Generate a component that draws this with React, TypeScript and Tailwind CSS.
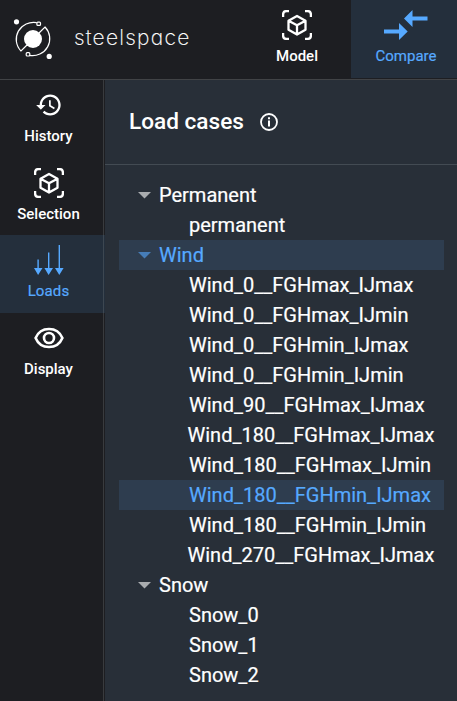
import React from "react";

function ModelIcon() {
  return (
    <svg width="30" height="30" viewBox="0 0 30 30" fill="none" stroke="currentColor" strokeWidth="2.3" strokeLinejoin="round">
      <path d="M1.100 7V4.500Q1.100 1.100 4.500 1.100H7M23 1.100h2.500Q28.900 1.100 28.900 4.500V7M28.900 23v2.500Q28.900 28.900 25.500 28.900H23M7 28.900H4.500Q1.100 28.900 1.100 25.500V23" />
      <path d="M15 6l8.500 4.700v9L15 24.500l-8.500-4.800v-9zM6.500 10.700L15 15.300l8.500-4.600M15 15.300v9" />
    </svg>
  );
}

function CompareIcon() {
  return (
    <svg width="44" height="30" viewBox="0 0 44 30" fill="currentColor">
      <path d="M20 8.500L28.500 0v6.500H43.500v4H28.500V17zM0 19.500h15V13l8.700 8.500L15 30v-6.500H0z" />
    </svg>
  );
}

function HistoryIcon() {
  return (
    <svg className="mb-[2px]" width="28" height="28" viewBox="0 0 24 24" fill="currentColor">
      <path d="M13 3c-4.970 0-9 4.030-9 9H1l3.890 3.890.07.14L9 12H6c0-3.870 3.130-7 7-7s7 3.130 7 7-3.130 7-7 7c-1.930 0-3.680-.79-4.940-2.060l-1.420 1.420C8.270 19.990 10.510 21 13 21c4.970 0 9-4.030 9-9s-4.030-9-9-9zm-1 5v5l4.280 2.540.72-1.210-3.500-2.080V8H12z" />
    </svg>
  );
}

function LoadsIcon() {
  return (
    <svg width="30" height="30" viewBox="0 0 30 30" fill="currentColor">
      <path d="M3.400 14.500h1.400v8.500H8.500l-4.400 7-4.100-7h3.400zM14 7.500h1.400V23H19l-4.400 7-4.200-7H14zM24.600 0H26v23h3.600l-4.300 7-4.300-7h3.600z" />
    </svg>
  );
}

function EyeIcon() {
  return (
    <svg width="30" height="22" viewBox="0 0 30 22" fill="none" stroke="currentColor" strokeWidth="2.600">
      <path d="M1.600 11C4 5.300 9 2 15 2s11 3.300 13.400 9C26 16.700 21 20 15 20S4 16.700 1.600 11z" />
      <circle cx="15" cy="11" r="5" />
    </svg>
  );
}

function Logo() {
  return (
    <svg width="40" height="42" viewBox="0 0 40 42" fill="none" stroke="white" strokeWidth="1.200">
      <circle cx="20" cy="20" r="9" fill="white" stroke="none" />
      <circle cx="3.500" cy="2.800" r="2.600" fill="white" stroke="none" />
      <circle cx="36.200" cy="37.400" r="2.600" fill="white" stroke="none" />
      <path d="M23.800 3.600A17.300 17 0 0 0 8 32L14 26M26 14l6-6A17.300 17 0 0 1 16.200 36.400" />
      <rect x="23.900" y="3.100" width="3.600" height="3.300" rx="1" />
      <rect x="13.200" y="33.700" width="3.600" height="3.300" rx="1" />
    </svg>
  );
}

const nav = [
  { label: "History", icon: <HistoryIcon />, active: false },
  { label: "Selection", icon: <ModelIcon />, active: false },
  { label: "Loads", icon: <LoadsIcon />, active: true },
  { label: "Display", icon: <EyeIcon />, active: false },
];

const groups = [
  { name: "Permanent", active: false, cases: ["permanent"] },
  {
    name: "Wind",
    active: true,
    cases: [
      "Wind_0__FGHmax_IJmax",
      "Wind_0__FGHmax_IJmin",
      "Wind_0__FGHmin_IJmax",
      "Wind_0__FGHmin_IJmin",
      "Wind_90__FGHmax_IJmax",
      "Wind_180__FGHmax_IJmax",
      "Wind_180__FGHmax_IJmin",
      "Wind_180__FGHmin_IJmax",
      "Wind_180__FGHmin_IJmin",
      "Wind_270__FGHmax_IJmax",
    ],
  },
  { name: "Snow", active: false, cases: ["Snow_0", "Snow_1", "Snow_2"] },
];

const selected = "Wind_180__FGHmin_IJmax";
const wide = ["Wind_180__FGHmax_IJmax", "Wind_270__FGHmax_IJmax"];

export default function App() {
  return (
    <div className="flex h-[701px] w-[457px] flex-col overflow-hidden bg-[#1d1e22] font-['Roboto',sans-serif] text-white">
      <header className="flex h-20 shrink-0 border-b border-[#414346]">
        <div className="flex flex-1 pl-[13px] pt-[19px]">
          <Logo />
          <span className="ml-[21px] mt-[2px] font-['Inter',sans-serif] text-[21px] font-extralight leading-[34px] tracking-[1.250px] [-webkit-text-stroke:0.15px] [font-feature-settings:'cv11']">
            steelspace
          </span>
        </div>
        <div className="flex h-[78px] w-[108px] flex-col items-center pt-[10px]">
          <ModelIcon />
          <span className="mt-[6px] text-[15px] font-medium leading-5">Model</span>
        </div>
        <div className="flex h-[78px] w-[106px] flex-col items-center bg-[#242f3c] pl-1 pt-[10px] text-[#56a9ff]">
          <CompareIcon />
          <span className="mt-[6px] text-[15px] leading-5 [-webkit-text-stroke:0.2px]">Compare</span>
        </div>
      </header>
      <div className="flex min-h-0 flex-1">
        <nav className="w-[105px] shrink-0 bg-[linear-gradient(to_right,transparent_103px,#393b3e_103px,#393b3e_104px,transparent_104px)]">
          {nav.map((item, i) => (
            <div
              key={item.label}
              className={`flex flex-col items-center pr-[8px] ${i === 0 ? "h-[77px]" : "h-[78px]"} ${
                i < 2 ? "pt-px" : ""
              } ${
                item.active ? "bg-[linear-gradient(to_right,#242f3c_103px,#3d4751_103px,#3d4751_104px,#242f3c_104px)] text-[#56a9ff]" : ""
              }`}
            >
              <div className={`flex shrink-0 items-center justify-center ${i === 0 ? "h-[49px]" : "h-[50px]"}`}>{item.icon}</div>
              <span className={`text-[15px] leading-[12px] ${item.active ? "tracking-[0.15px] [-webkit-text-stroke:0.2px]" : "font-medium"}`}>{item.label}</span>
            </div>
          ))}
        </nav>
        <main className="flex-1 bg-[#282f38]">
          <div className="flex h-[85px] items-center border-b border-[#434b53] pl-6">
            <h1 className="text-[22.6px] font-medium leading-7">Load cases</h1>
            <svg className="ml-4" width="18" height="18" viewBox="0 0 18 18" fill="none" stroke="currentColor" strokeWidth="1.800">
              <circle cx="9" cy="9" r="8" />
              <path d="M9 4.200v2M9 7.600v5.900" strokeWidth="2" />
            </svg>
          </div>
          <ul className="pl-[14px] pr-[13px] pt-[15px] text-[20px] leading-[30px] [-webkit-text-stroke:0.2px]">
            {groups.map((group) => (
              <li key={group.name}>
                <div className={`flex h-[30px] items-center pl-[19px] ${group.active ? "bg-[#2e3d4f] text-[#56a9ff]" : ""}`}>
                  <svg className="opacity-60" width="13" height="7" viewBox="0 0 13 7" fill="currentColor">
                    <path d="M0 0h13L6.500 6.500z" />
                  </svg>
                  <span className="ml-2">{group.name}</span>
                </div>
                <ul>
                  {group.cases.map((name) => (
                    <li
                      key={name}
                      className={`h-[30px] whitespace-nowrap ${wide.includes(name) ? "pl-[68.500px]" : "pl-[70px]"} ${
                        name === selected ? "bg-[#2e3d4f] text-[#56a9ff]" : ""
                      }`}
                    >
                      {name}
                    </li>
                  ))}
                </ul>
              </li>
            ))}
          </ul>
        </main>
      </div>
    </div>
  );
}
